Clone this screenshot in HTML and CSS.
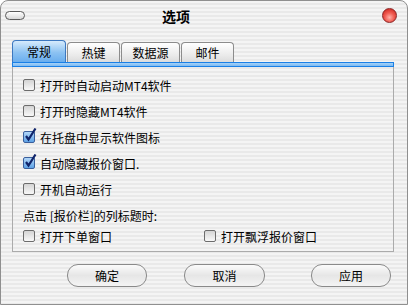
FILE: index.html
```html
<!DOCTYPE html>
<html lang="zh-CN">
<head>
  <meta charset="UTF-8" />
  <title>选项</title>
  <link rel="stylesheet" href="styles.css">
</head>
<body>
  <div class="window">
    <div class="titlebar">
      <span class="pill"></span>
      <span class="title">选项</span>
      <span class="close"></span>
    </div>

    <div class="tabs">
      <div class="tab active">常规</div>
      <div class="tab t2">热键</div>
      <div class="tab t3">数据源</div>
      <div class="tab t4">邮件</div>
    </div>
    <div class="tabbar"></div>

    <div class="panel">
      <div class="row"><span class="box"></span>打开时自动启动MT4软件</div>
      <div class="row"><span class="box"></span>打开时隐藏MT4软件</div>
      <div class="row"><span class="box checked"><svg width="14" height="15" viewBox="0 0 14 15"><path d="M3 8 L5.5 11.5 L12.5 0.5" fill="none" stroke="#10246a" stroke-width="2.2"/></svg></span>在托盘中显示软件图标</div>
      <div class="row"><span class="box checked"><svg width="14" height="15" viewBox="0 0 14 15"><path d="M3 8 L5.5 11.5 L12.5 0.5" fill="none" stroke="#10246a" stroke-width="2.2"/></svg></span>自动隐藏报价窗口.</div>
      <div class="row"><span class="box"></span>开机自动运行</div>
      <div class="row label">点击 [报价栏]的列标题时:</div>
      <div class="row last">
        <div class="cell"><span class="box"></span>打开下单窗口</div>
        <div class="cell"><span class="box"></span>打开飘浮报价窗口</div>
      </div>
    </div>

    <div class="buttons">
      <button class="btn ok">确定</button>
      <button class="btn cancel">取消</button>
      <button class="btn apply">应用</button>
    </div>
  </div>
</body>
</html>
```

FILE: styles.css
```css
body { margin: 0; font-family: "Noto Sans CJK SC", "Noto Sans", sans-serif; font-size: 12px; color: #000; }

.window {
  width: 408px;
  height: 305px;
  box-sizing: border-box;
  border: 1px solid #8f8f8f;
  border-radius: 8px 8px 0 0;
  background: repeating-linear-gradient(to bottom, #f4f4f4 0 2px, #e9e9e9 2px 4px);
  overflow: hidden;
}

.titlebar { height: 28px; display: flex; align-items: center; position: relative; }
.pill {
  width: 18px; height: 7px; margin-left: 4px; margin-top: 1px;
  border: 1px solid #5a5a5a; border-radius: 5px;
  background: linear-gradient(#ffffff, #d8d8d8);
}
.title { font-size: 14px; font-weight: bold; margin-left: 137px; margin-top: 2px; }
.close {
  width: 13px; height: 13px; margin-left: auto; margin-right: 10px; margin-top: 1px;
  border: 1px solid #8a2424; border-radius: 50%;
  background: radial-gradient(circle at 50% 65%, #ffb0a8 0, #f05a50 45%, #c41a14 100%);
}

.tabs { display: flex; align-items: flex-end; margin-left: 11px; margin-top: 11px; height: 22px; }
.tab {
  height: 20px; box-sizing: border-box; margin-right: 1px;
  border: 1px solid #8c8c8c; border-bottom: none; border-radius: 4px 4px 0 0;
  background: linear-gradient(#ffffff, #ececec 60%, #dcdcdc);
  display: flex; align-items: center; justify-content: center;
  width: 53px;
}
.tab.active {
  height: 22px; width: 54px;
  border-color: #3c78c0;
  background: linear-gradient(#d6ebfc, #8cc2f2 55%, #6aaeee);
}
.tab.t3 { width: 59px; }

.tabbar {
  margin-left: 11px; width: 382px; height: 5px; box-sizing: border-box;
  border: 1px solid #1a80e6;
  background: linear-gradient(#a6d2f8, #7cbaf2);
}

.panel {
  margin-left: 11px; width: 382px; height: 185px; box-sizing: border-box;
  border: 1px solid #ababab; border-top: none;
  padding: 5px 0 0 10px;
}
.row { height: 26px; display: flex; align-items: center; }
.row.last { height: 16px; }
.cell { display: flex; align-items: center; width: 181px; }

.box {
  width: 12px; height: 12px; box-sizing: border-box; margin-right: 5px; flex: none;
  border: 1px solid #6c6c6c; border-radius: 2px;
  background: linear-gradient(#d4d4d4, #f8f8f8);
  position: relative;
}
.box.checked {
  border-color: #3a5f9c;
  background: linear-gradient(#b2d6f8, #5ea2e6);
}
.box svg { position: absolute; left: -1px; top: -4px; }

.buttons { display: flex; margin-top: 12px; }
.btn {
  height: 23px; width: 80px; box-sizing: border-box;
  border: 1px solid #8a8a8a; border-radius: 11px;
  background: linear-gradient(#fbfbfb, #e6e6e6 50%, #f4f4f4);
  font-family: inherit; font-size: 12px; color: #000; padding: 0;
}
.btn.ok { margin-left: 66px; }
.btn.cancel { margin-left: 37px; width: 81px; }
.btn.apply { margin-left: 46px; }
```
